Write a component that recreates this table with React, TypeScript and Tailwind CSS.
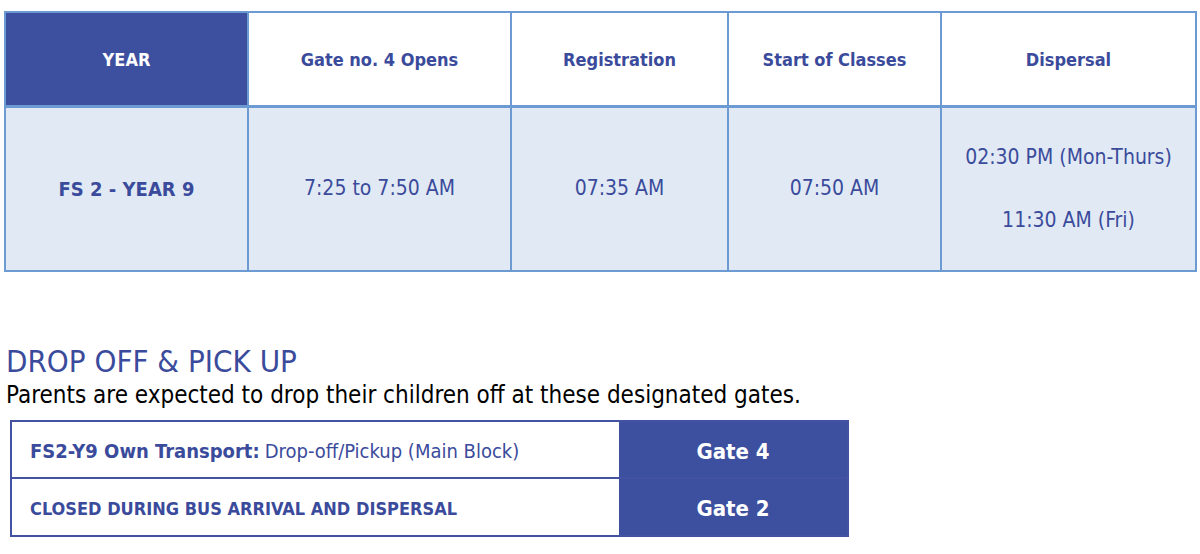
import React from "react";

const font = { fontFamily: '"DejaVu Sans Condensed", "DejaVu Sans", sans-serif' };

const headers = ["Gate no. 4 Opens", "Registration", "Start of Classes", "Dispersal"];

const App = () => {
  return (
    <div className="w-[1200px] h-[554px] bg-white text-[#3b4b9c]" style={font}>
      {/* Timings table */}
      <div className="pt-[11px] pl-[4px] pr-[3px]">
        <table className="w-full border-collapse table-fixed">
          <colgroup>
            <col className="w-[243px]" />
            <col className="w-[263px]" />
            <col className="w-[217px]" />
            <col className="w-[213px]" />
            <col />
          </colgroup>
          <thead>
            <tr className="h-[94px]">
              <th className="border-2 border-b-[3px] border-[#6c9bd3] bg-[#3d4f9f] text-white text-[18px] font-bold pt-[1px]">
                YEAR
              </th>
              {headers.map((h) => (
                <th
                  key={h}
                  className="border-2 border-b-[3px] border-[#6c9bd3] bg-white text-[18px] font-bold pt-[1px]"
                >
                  {h}
                </th>
              ))}
            </tr>
          </thead>
          <tbody>
            <tr className="h-[165px] bg-[#e1eaf4] text-[21px] text-center">
              <td className="border-2 border-[#6c9bd3] font-bold text-[20px]">FS 2 - YEAR 9</td>
              <td className="border-2 border-[#6c9bd3]">7:25 to 7:50 AM</td>
              <td className="border-2 border-[#6c9bd3]">07:35 AM</td>
              <td className="border-2 border-[#6c9bd3]">07:50 AM</td>
              <td className="border-2 border-[#6c9bd3]">
                <p className="leading-[26px]">02:30 PM (Mon-Thurs)</p>
                <p className="leading-[26px] mt-[37px]">11:30 AM (Fri)</p>
              </td>
            </tr>
          </tbody>
        </table>
      </div>

      {/* Drop off section */}
      <div className="pl-[6px] pt-[71px]">
        <h2 className="text-[31px] leading-[36px] font-light">DROP OFF &amp; PICK UP</h2>
        <p className="text-[24px] leading-[28px] mt-[2px] text-black">
          Parents are expected to drop their children off at these designated gates.
        </p>
      </div>

      <div className="ml-[10px] mt-[11px] w-[839px] border-2 border-[#4352a3]">
        <div className="flex h-[57px] border-b-2 border-[#4352a3]">
          <div className="flex-1 flex items-center pl-[18px] pt-[3px] text-[20px]">
            <span className="font-bold">FS2-Y9 Own Transport:</span>
            <span className="ml-[5px]">Drop-off/Pickup (Main Block)</span>
          </div>
          <div className="w-[228px] bg-[#3d4f9f] text-white font-bold text-[22px] pt-[3px] flex items-center justify-center">
            Gate 4
          </div>
        </div>
        <div className="flex h-[56px]">
          <div className="flex-1 flex items-center pl-[18px] pt-[3px] text-[18px] font-bold">
            CLOSED DURING BUS ARRIVAL AND DISPERSAL
          </div>
          <div className="w-[228px] bg-[#3d4f9f] text-white font-bold text-[22px] pt-[3px] flex items-center justify-center">
            Gate 2
          </div>
        </div>
      </div>
    </div>
  );
};

export default App;
